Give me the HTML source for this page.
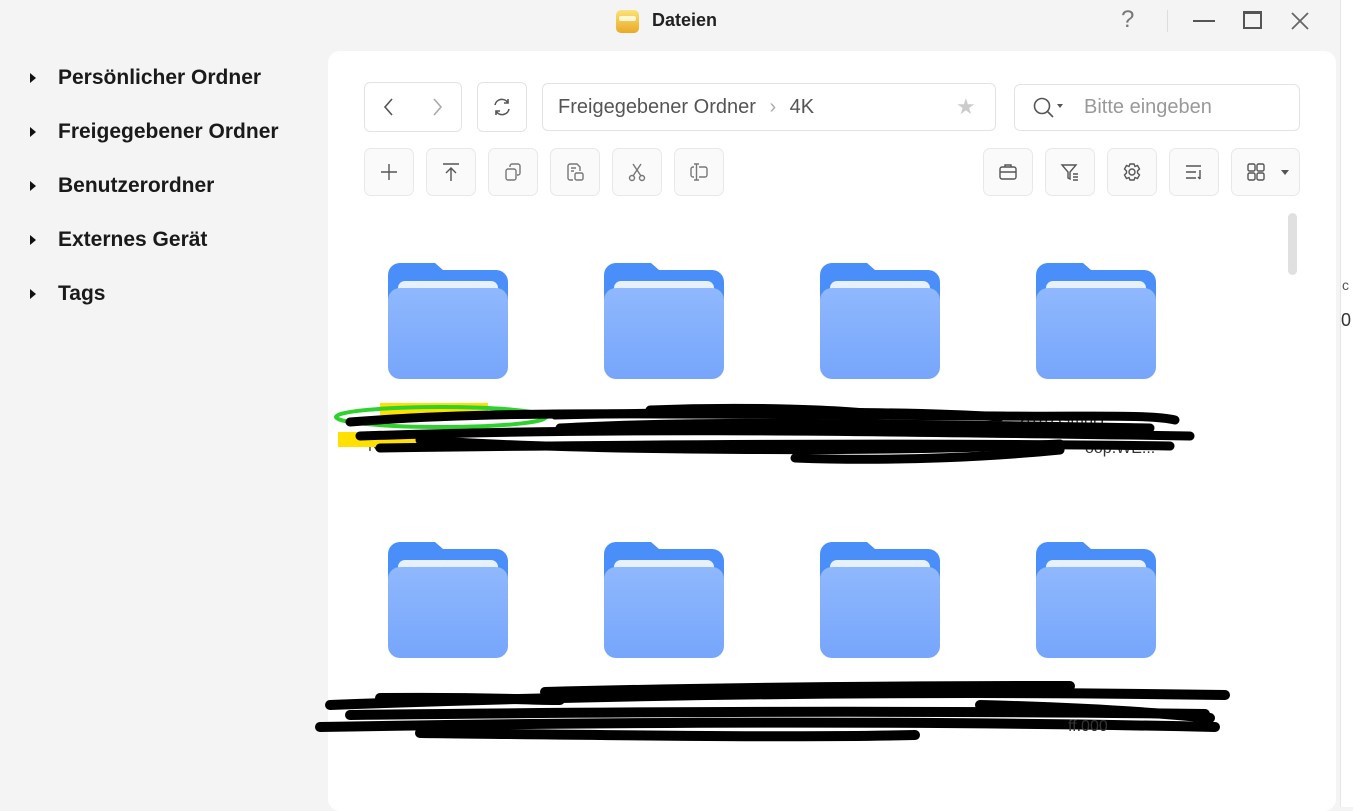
<!DOCTYPE html>
<html><head><meta charset="utf-8"><style>
*{margin:0;padding:0;box-sizing:border-box}
body{width:1353px;height:807px;background:#f4f4f4;font-family:"Liberation Sans",sans-serif;position:relative;overflow:hidden}
.abs{position:absolute}
.nav{position:absolute;left:30px;font-size:21px;font-weight:bold;color:#1a1a1a}
.nav:before{content:"";position:absolute;left:0;top:7px;border-left:6px solid #111;border-top:5px solid transparent;border-bottom:5px solid transparent}
.nav span{margin-left:28px}
.panel{position:absolute;left:328px;top:51px;width:1008px;height:760px;background:#fff;border-radius:12px}
.btn{position:absolute;border:1px solid #e3e3e3;border-radius:6px;background:#fff}
.tb{position:absolute;top:148px;width:50px;height:48px;border:1px solid #e8e8e8;border-radius:7px;background:#fafafa;display:flex;align-items:center;justify-content:center}
.tb svg{width:22px;height:22px;fill:none;stroke:#777;stroke-width:1.4}
.folder{position:absolute;width:120px;height:116px}
</style></head><body>
<div class="abs" style="left:616px;top:10px;width:23px;height:23px;border-radius:5px;background:linear-gradient(#fbe27a,#e9a925)"><div style="position:absolute;left:3px;top:6px;width:17px;height:5px;background:#fff6d2;border-radius:2px"></div></div>
<div class="abs" style="left:652px;top:10px;font-size:18px;font-weight:bold;color:#222">Dateien</div>
<div class="abs" style="left:1121px;top:6px;font-size:24px;color:#777">?</div>
<div class="abs" style="left:1167px;top:10px;width:1px;height:22px;background:#ddd"></div>
<div class="abs" style="left:1193px;top:20px;width:22px;height:2px;background:#555"></div>
<div class="abs" style="left:1243px;top:11px;width:19px;height:18px;border:2px solid #555;border-top-width:3px"></div>
<svg class="abs" style="left:1290px;top:11px" width="20" height="20"><path d="M2 2L18 18M18 2L2 18" stroke="#666" stroke-width="1.8"/></svg>

<div class="nav" style="top:66px"><span>Persönlicher Ordner</span></div>
<div class="nav" style="top:120px"><span>Freigegebener Ordner</span></div>
<div class="nav" style="top:174px"><span>Benutzerordner</span></div>
<div class="nav" style="top:228px"><span>Externes Gerät</span></div>
<div class="nav" style="top:282px"><span>Tags</span></div>

<div class="abs" style="left:1340px;top:0;width:13px;height:807px;background:#fff;border-left:1px solid #e6e6e6"></div>
<div class="abs" style="left:1342px;top:277px;font-size:14px;color:#555">c</div>
<div class="abs" style="left:1341px;top:310px;font-size:18px;color:#333">0</div>

<div class="panel"></div>
<div class="btn" style="left:364px;top:82px;width:98px;height:50px"></div>
<svg class="abs" style="left:382px;top:97px" width="14" height="20"><path d="M10 2L3 10L10 18" fill="none" stroke="#555" stroke-width="1.6"/></svg>
<svg class="abs" style="left:430px;top:97px" width="14" height="20"><path d="M4 2L11 10L4 18" fill="none" stroke="#aaa" stroke-width="1.6"/></svg>
<div class="btn" style="left:477px;top:82px;width:50px;height:50px"></div>
<svg class="abs" style="left:491px;top:96px" width="22" height="22" fill="none" stroke="#555" stroke-width="1.6"><path d="M4 9a7 7 0 0 1 13-2M18 13a7 7 0 0 1-13 2"/><path d="M17 3v4h-4M5 19v-4h4"/></svg>
<div class="btn" style="left:542px;top:83px;width:454px;height:48px"></div>
<div class="abs" style="left:558px;top:96px;font-size:20px;color:#555">Freigegebener Ordner <span style="color:#aaa;margin:0 8px">›</span> 4K</div>
<div class="abs" style="left:956px;top:94px;font-size:22px;color:#ccc">★</div>
<div class="btn" style="left:1014px;top:84px;width:286px;height:47px"></div>
<svg class="abs" style="left:1032px;top:96px" width="24" height="24" fill="none" stroke="#555" stroke-width="1.6"><circle cx="10" cy="10" r="7.5"/><path d="M15.5 15.5L21 21"/></svg>
<div class="abs" style="left:1057px;top:104px;border-top:4px solid #555;border-left:3.5px solid transparent;border-right:3.5px solid transparent"></div>
<div class="abs" style="left:1084px;top:96px;font-size:20px;color:#999">Bitte eingeben</div>

<div class="tb" style="left:364px"><svg><path d="M11 3v16M3 11h16" stroke="#555"/></svg></div>
<div class="tb" style="left:426px"><svg><path d="M3 3h16M11 7v13M6 12l5-5 5 5" stroke="#555"/></svg></div>
<div class="tb" style="left:488px"><svg><rect x="4" y="8" width="10" height="11" rx="2"/><path d="M8 6V5a2 2 0 0 1 2-2h6a2 2 0 0 1 2 2v7a2 2 0 0 1-2 2h-1"/></svg></div>
<div class="tb" style="left:550px"><svg><path d="M9 19H6a2 2 0 0 1-2-2V5a2 2 0 0 1 2-2h7l3 3v4M7 7h5M7 10h3"/><rect x="11" y="12" width="8" height="7" rx="1.5"/></svg></div>
<div class="tb" style="left:612px"><svg><circle cx="6" cy="17" r="2.5"/><circle cx="16" cy="17" r="2.5"/><path d="M7 15L15 3M15 15L7 3"/></svg></div>
<div class="tb" style="left:674px"><svg><path d="M6 3h5M6 19h5M8.5 3v16M11 6h6a2 2 0 0 1 2 2v6a2 2 0 0 1-2 2h-6M6 6H5a2 2 0 0 0-2 2v6a2 2 0 0 0 2 2h1"/></svg></div>
<div class="tb" style="left:983px"><svg><rect x="3" y="6" width="16" height="12" rx="2" stroke="#555"/><path d="M8 6V4h6v2M3 11h16" stroke="#555"/></svg></div>
<div class="tb" style="left:1045px"><svg><path d="M3 4h14l-6 7v7l-2-1v-6z" stroke="#555"/><path d="M14 13h5M14 16h5M14 19h5" stroke="#555"/></svg></div>
<div class="tb" style="left:1107px"><svg><circle cx="11" cy="11" r="3" stroke="#555"/><path d="M9 3h4l1 2.5 2.5-1 2 3.5-2 2v2l2 2-2 3.5-2.5-1L13 19H9l-1-2.5-2.5 1-2-3.5 2-2v-2l-2-2 2-3.5 2.5 1z" stroke="#555"/></svg></div>
<div class="tb" style="left:1169px"><svg><path d="M3 5h15M3 11h10M3 17h10M17 9v9M15 16l2 2" stroke="#555"/></svg></div>
<div class="tb" style="left:1231px;width:69px;justify-content:flex-start;padding-left:13px"><svg><rect x="3" y="3" width="7" height="7" rx="1.5" stroke="#555"/><rect x="12" y="3" width="7" height="7" rx="1.5" stroke="#555"/><rect x="3" y="12" width="7" height="7" rx="1.5" stroke="#555"/><rect x="12" y="12" width="7" height="7" rx="1.5" stroke="#555"/></svg><div style="margin-left:14px;border-top:5px solid #555;border-left:4px solid transparent;border-right:4px solid transparent"></div></div>

<div class="abs" style="left:1288px;top:213px;width:9px;height:62px;border-radius:5px;background:#e0e0e0"></div>

<svg width="0" height="0" style="position:absolute"><defs>
<linearGradient id="fg" x1="0" y1="0" x2="0" y2="1"><stop offset="0" stop-color="#8fb8fd"/><stop offset="1" stop-color="#76a5fb"/></linearGradient>
<symbol id="fd" viewBox="0 0 120 116"><path d="M0 12a12 12 0 0 1 12-12h35l8 7h53a12 12 0 0 1 12 12v60H0z" fill="#4a8ef9"/><rect x="10" y="18" width="100" height="30" rx="7" fill="#e6f0ff"/><rect x="0" y="25" width="120" height="91" rx="12" fill="url(#fg)"/></symbol>
</defs></svg>
<svg class="folder" style="left:388px;top:263px"><use href="#fd"/></svg>
<svg class="folder" style="left:604px;top:263px"><use href="#fd"/></svg>
<svg class="folder" style="left:820px;top:263px"><use href="#fd"/></svg>
<svg class="folder" style="left:1036px;top:263px"><use href="#fd"/></svg>
<svg class="folder" style="left:388px;top:542px"><use href="#fd"/></svg>
<svg class="folder" style="left:604px;top:542px"><use href="#fd"/></svg>
<svg class="folder" style="left:820px;top:542px"><use href="#fd"/></svg>
<svg class="folder" style="left:1036px;top:542px"><use href="#fd"/></svg>

<div class="abs" style="left:368px;top:438px;font-size:16px;color:#333">NN</div>
<div class="abs" style="left:1018px;top:412px;font-size:16px;color:#333">2010 GmbH</div>
<div class="abs" style="left:1085px;top:440px;font-size:16px;color:#333">oop.WE...</div>
<svg class="abs" style="left:0;top:0" width="1353" height="807" fill="none" stroke="#000" stroke-linecap="round">
<path d="M380 403h108v12h-108zM338 432h120v15h-120z" fill="#ffe000" stroke="none"/>
<ellipse cx="441" cy="417" rx="105" ry="10" stroke="#2fd12f" stroke-width="4"/>
<g stroke-width="9">
<path d="M350 422C500 410 650 414 1000 416C1080 417 1150 414 1175 420"/>
<path d="M360 436C600 428 800 430 1190 436"/>
<path d="M380 448C600 445 900 442 1170 446"/>
<path d="M555 415C700 412 900 410 1000 417"/>
<path d="M650 410C750 406 850 410 880 415"/>
<path d="M420 440C600 452 900 452 1060 444"/>
<path d="M795 458C900 462 1000 456 1060 450"/>
<path d="M560 428C700 420 900 424 1150 428"/>
</g>
<g stroke-width="10">
<path d="M330 705C600 695 900 690 1225 695"/>
<path d="M320 727C600 722 900 720 1215 727"/>
<path d="M350 715C600 712 900 710 1205 714"/>
<path d="M545 692C700 688 900 686 1070 686"/>
<path d="M420 733C600 735 800 738 915 735"/>
<path d="M380 698C500 697 520 700 560 700"/>
<path d="M980 705C1100 708 1180 715 1210 718"/>
</g>
</svg>
<div class="abs" style="left:1068px;top:718px;font-size:16px;color:#333">ff.000</div>
</body></html>
